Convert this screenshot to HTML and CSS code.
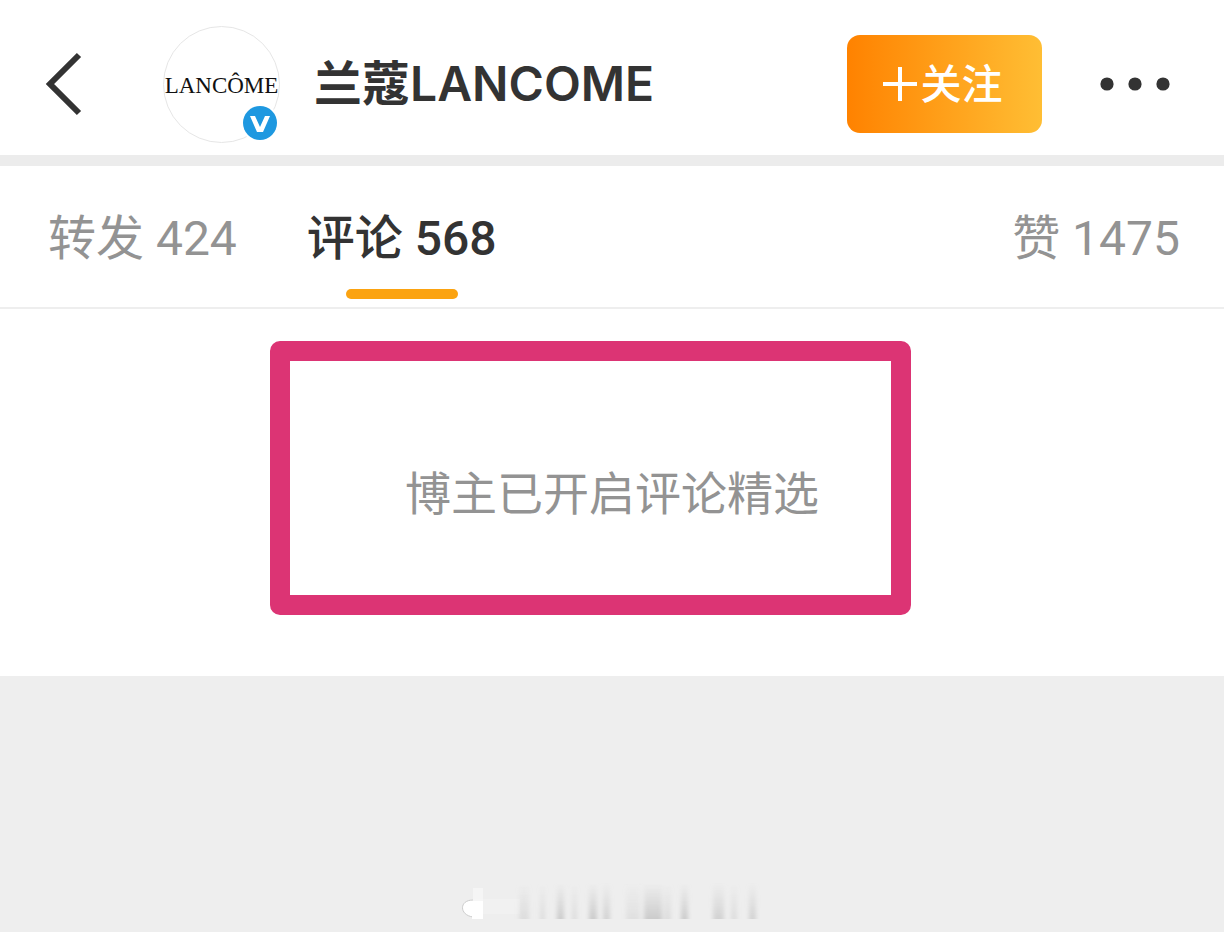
FILE: index.html
```html
<!DOCTYPE html>
<html lang="zh-CN">
<head>
  <meta charset="UTF-8">
  <meta name="viewport" content="width=device-width, initial-scale=1">
  <title>兰蔻LANCOME</title>
  <link rel="stylesheet" href="styles.css">
</head>
<body>
<header class="topbar">
  <button class="icon-btn back" type="button" aria-label="返回">
    <svg width="40" height="64" viewBox="0 0 40 64"><path d="M37 3 L8 32 L37 61" fill="none" stroke="#333" stroke-width="6"/></svg>
  </button>
  <a class="avatar" href="#">
    <span class="avatar-logo">LANCÔME</span>
    <svg class="verified" width="38" height="38" viewBox="0 0 38 38">
      <circle cx="19" cy="19" r="19" fill="#fff"/>
      <circle cx="19" cy="19" r="17" fill="#1e98e0"/>
      <path d="M9 12h5l5 11 5-11h5l-7 16h-6z" fill="#fff"/>
    </svg>
  </a>
  <h1 class="name">兰蔻LANCOME</h1>
  <button class="follow" type="button">
    <svg width="34" height="34" viewBox="0 0 34 34"><path d="M17 0v34M0 17h34" stroke="#fff" stroke-width="4"/></svg>
    <span>关注</span>
  </button>
  <button class="icon-btn more" type="button" aria-label="更多">
    <svg width="70" height="14" viewBox="0 0 70 14" fill="#333"><circle cx="7" cy="7" r="6.6"/><circle cx="35" cy="7" r="6.6"/><circle cx="63" cy="7" r="6.6"/></svg>
  </button>
</header>

<nav class="tabs">
  <a class="tab" href="#">转发 424</a>
  <a class="tab active" href="#">评论 568</a>
  <a class="tab likes" href="#">赞 1475</a>
</nav>

<main class="comments">
  <p class="notice">博主已开启评论精选</p>
  <div class="highlight"></div>
</main>

<footer class="footer">
  <!-- faded watermark streaks -->
  <svg class="streaks" width="304" height="44" viewBox="0 0 304 44">
    <defs>
      <linearGradient id="fade" x1="0" y1="0" x2="0" y2="1">
        <stop offset="0" stop-color="#bbb" stop-opacity="0"/>
        <stop offset="1" stop-color="#b4b4b4" stop-opacity=".6"/>
      </linearGradient>
      <filter id="soft" x="-5%" y="-5%" width="110%" height="110%"><feGaussianBlur stdDeviation="2 0"/></filter>
    </defs>
    <path d="M10 19h50v15H10z" fill="#f1f1f1"/>
    <path d="M13 20C-1 20-1 35 13 37" fill="#fff" stroke="#ccc"/>
    <path d="M13 8h10v31H13z" fill="#fff" opacity=".4"/>
    <path d="M12 21h11v18H12z" fill="#fff"/>
    <g fill="url(#fade)" filter="url(#soft)">
      <rect x="59" y="3" width="10" height="36" opacity=".5"/>
      <rect x="80" y="3" width="5" height="36" opacity=".5"/>
      <rect x="97" y="3" width="7" height="36"/>
      <rect x="112" y="3" width="5" height="36" opacity=".5"/>
      <rect x="129" y="3" width="8" height="36"/>
      <rect x="143" y="3" width="7" height="36" opacity=".8"/>
      <rect x="166" y="3" width="14" height="36" opacity=".4"/>
      <rect x="184" y="3" width="18" height="36"/>
      <rect x="204" y="3" width="7" height="36" opacity=".5"/>
      <rect x="221" y="3" width="7" height="36"/>
      <rect x="253" y="3" width="11" height="36" opacity=".8"/>
      <rect x="271" y="3" width="6" height="36" opacity=".5"/>
      <rect x="289" y="3" width="7" height="36" opacity=".8"/>
    </g>
  </svg>
</footer>
</body>
</html>
```
FILE: styles.css
```css
:root{
  --text: #333;
  --muted: #939393;
  --page: #eee;
  --orange: #fba311;
}
*{
  box-sizing: border-box;
}
body{
  margin: 0;
  min-height: 100vh;
  display: flex;
  flex-direction: column;
  background-color: var(--page);
  color: var(--text);
  font-family: Inter, "Noto Sans CJK SC", sans-serif;
}
a{
  color: inherit;
  text-decoration: none;
}
button{
  border: 0;
  padding: 0;
  font-family: inherit;
  cursor: pointer;
}
svg{
  display: block;
}

.topbar{
  display: flex;
  align-items: center;
  height: 155px;
  padding: 13px 54px 0 42px;
  background-color: #fff;
}
.icon-btn{
  background: none;
}
.avatar{
  position: relative;
  display: flex;
  align-items: center;
  justify-content: center;
  flex: none;
  width: 117px;
  height: 117px;
  margin-left: 81px;
  padding-top: 4px;
  border: 1px solid #e6e6e6;
  border-radius: 50%;
}
.avatar-logo{
  color: #111;
  font-family: "Liberation Serif", serif;
  font-size: 23px;
}
.verified{
  position: absolute;
  right: 0;
  bottom: 0;
}
.name{
  margin: 0 auto 0 34px;
  font-size: 48px;
  font-weight: 600;
  line-height: 64px;
  white-space: nowrap;
}
.follow{
  display: flex;
  align-items: center;
  justify-content: center;
  gap: 4px;
  width: 195px;
  height: 98px;
  padding-right: 4px;
  border-radius: 13px;
  background: linear-gradient(to right, #ff8200, #ffbe34);
  color: #fff;
  font-size: 41px;
  font-weight: 500;
  line-height: 60px;
}
.more{
  margin-left: 58px;
}

.tabs{
  display: flex;
  gap: 70px;
  height: 154px;
  padding: 0 44px 0 48px;
  border-top: 11px solid #ececec;
  border-bottom: 2px solid #eee;
  background-color: #fff;
  font-family: Roboto, "Noto Sans CJK SC", sans-serif;
}
.tab{
  position: relative;
  color: var(--muted);
  font-size: 48px;
  line-height: 145px;
  white-space: nowrap;
}
.tab.active{
  color: var(--text);
  font-weight: 500;
}
.tab.active:after{
  content: "";
  position: absolute;
  left: 50%;
  bottom: 8px;
  width: 112px;
  height: 10px;
  margin-left: -56px;
  border-radius: 5px;
  background-color: var(--orange);
}
.likes{
  margin-left: auto;
}

.comments{
  position: relative;
  padding: 151px 0 149px;
  background-color: #fff;
}
.notice{
  margin: 0;
  color: var(--muted);
  font-size: 46px;
  line-height: 67px;
  text-align: center;
}
/* marker frame over the notice */
.highlight{
  position: absolute;
  top: 32px;
  bottom: 61px;
  left: calc(50% - 342px);
  width: 641px;
  border: 20px solid #dc3474;
  border-radius: 10px;
}

.footer{
  display: flex;
  justify-content: center;
  margin-top: auto;
  padding-bottom: 8px;
}
```
